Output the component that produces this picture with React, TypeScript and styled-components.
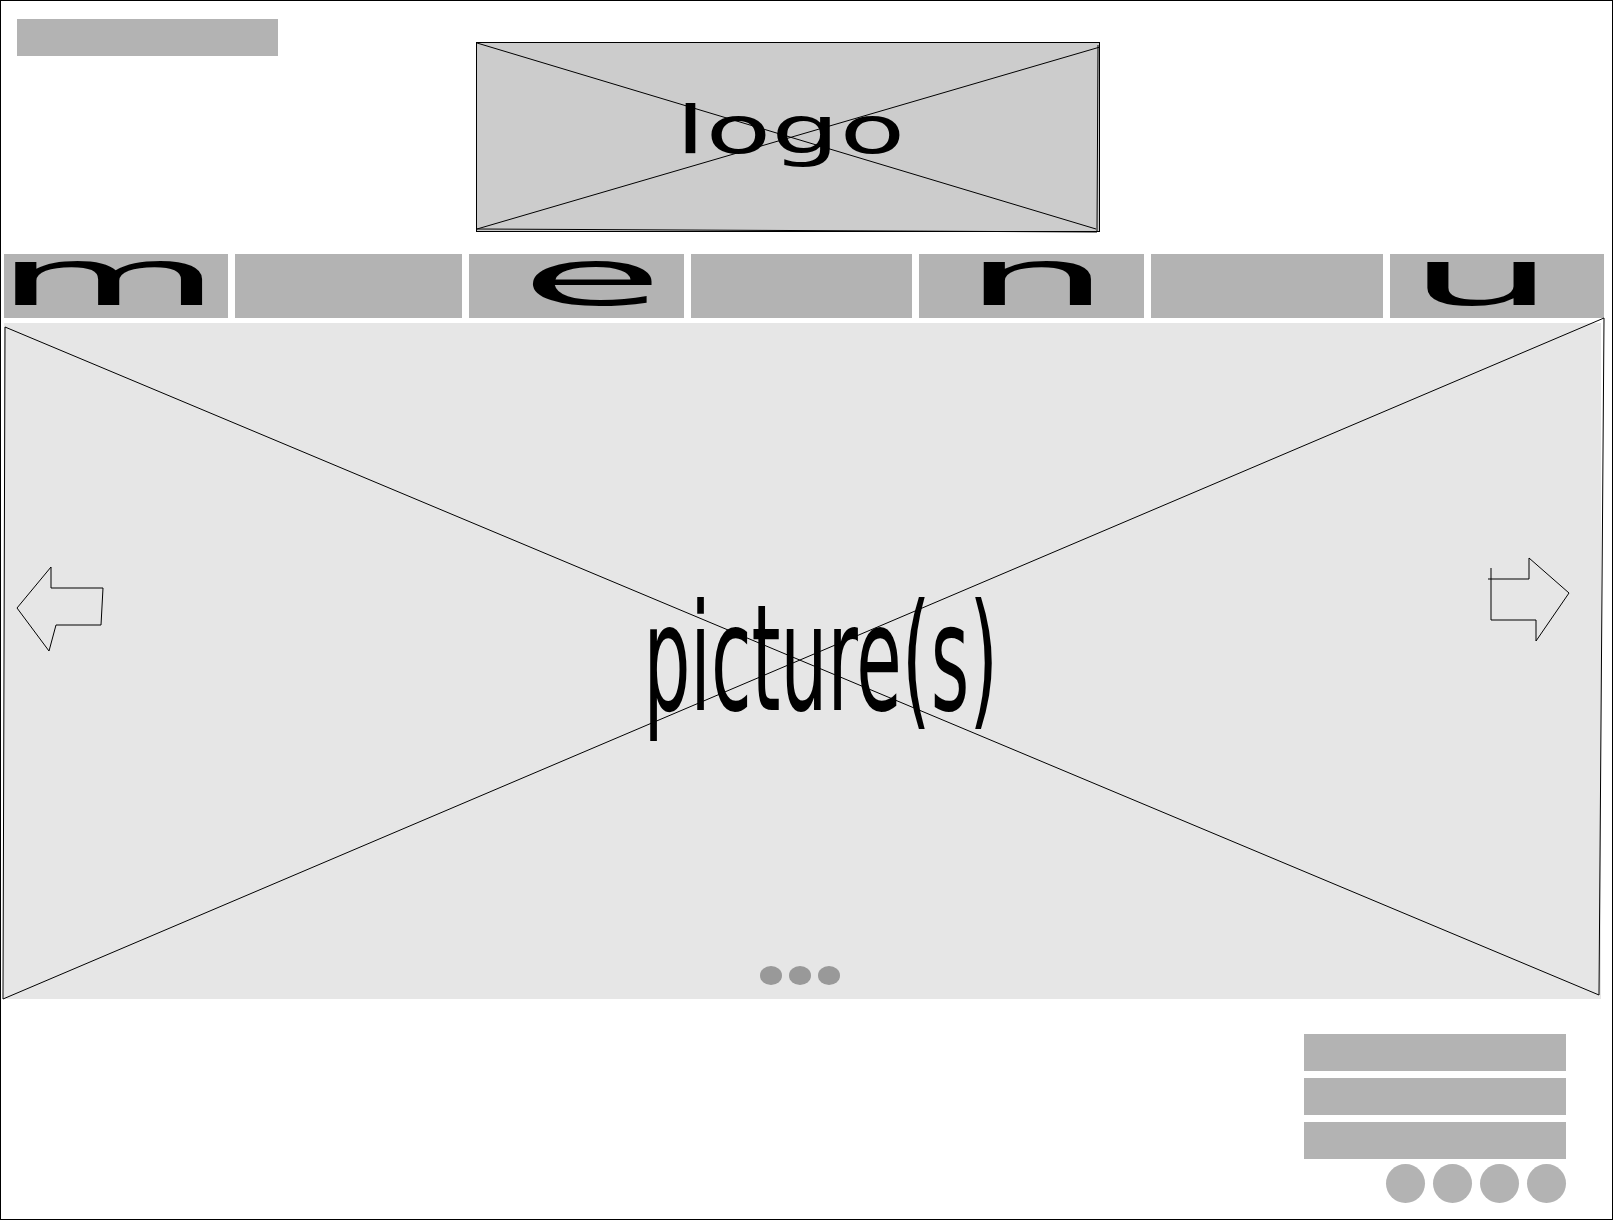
import React from "react";
import styled, { createGlobalStyle } from "styled-components";

const Global = createGlobalStyle`
  html, body { margin: 0; padding: 0; background: #ffffff; }
  body { font-family: "DejaVu Sans", "Liberation Sans", sans-serif; }
`;

const Frame = styled.div`
  width: 1613px;
  height: 1220px;
  box-sizing: border-box;
  border: 1px solid #000;
  background: #fff;
  display: flex;
  flex-direction: column;
  overflow: hidden;
`;

const Header = styled.header`
  height: 253px;
  display: flex;
  align-items: flex-start;
  flex-shrink: 0;
`;

const TopBar = styled.div`
  margin: 18px 0 0 16px;
  width: 261px;
  height: 37px;
  background: #b3b3b3;
`;

const LogoBox = styled.div`
  position: relative;
  margin: 41px 0 0 198px;
  width: 624px;
  height: 190px;
  box-sizing: border-box;
  border: 1px solid #000;
  background: #cccccc;
  display: flex;
  justify-content: center;
  align-items: flex-start;
  padding-top: 55px;
`;

const LogoText = styled.span`
  position: relative;
  font-family: "DejaVu Sans", sans-serif;
  font-size: 66px;
  line-height: 66px;
  color: #000;
  transform: translateX(2px) scaleX(1.63);
`;

const Overlay = styled.svg`
  position: absolute;
  left: 0;
  top: 0;
  width: 100%;
  height: 100%;
  overflow: visible;
  pointer-events: none;
`;

const Menu = styled.nav`
  margin-left: 3px;
  width: 1600px;
  height: 64px;
  display: grid;
  grid-template-columns: 224px 227px 215px 221px 225px 232px 214px;
  column-gap: 7px;
  flex-shrink: 0;
`;

const Segment = styled.div`
  background: #b3b3b3;
  display: flex;
  justify-content: center;
  align-items: flex-start;
`;

const Letter = styled.span<{ $shift: number }>`
  font-family: "DejaVu Sans", sans-serif;
  font-size: 78px;
  line-height: 48px;
  color: #000;
  transform: translateX(${(p) => p.$shift}px) scaleX(3);
`;

const Picture = styled.section`
  position: relative;
  margin: 5px 0 0 3px;
  width: 1597px;
  height: 676px;
  box-sizing: border-box;
  background: #e6e6e6;
  display: flex;
  justify-content: center;
  align-items: center;
  padding: 0 0 4px 36px;
  flex-shrink: 0;
`;

const PictureText = styled.span`
  position: relative;
  font-family: "DejaVu Sans", sans-serif;
  font-size: 148px;
  line-height: 148px;
  color: #000;
  transform: scaleX(0.5);
  white-space: nowrap;
`;

const ArrowButton = styled.svg<{ $side: "left" | "right"; $top: number }>`
  position: absolute;
  top: ${(p) => p.$top}px;
  ${(p) => (p.$side === "left" ? "left: 10px;" : "right: 21px;")}
  width: 100px;
  height: 100px;
  overflow: visible;
`;

const Dots = styled.div`
  position: absolute;
  bottom: 14px;
  left: calc(50% - 3px);
  transform: translateX(-50%);
  display: flex;
  gap: 7px;
`;

const Dot = styled.span`
  width: 22px;
  height: 19px;
  border-radius: 50%;
  background: #999999;
`;

const Footer = styled.footer`
  align-self: flex-end;
  margin: 35px 46px 0 0;
  width: 262px;
  display: flex;
  flex-direction: column;
  gap: 7px;
`;

const FooterBar = styled.div`
  height: 37px;
  background: #b3b3b3;
`;

const Socials = styled.div`
  margin-top: -2px;
  display: flex;
  justify-content: flex-end;
  gap: 8px;
`;

const Social = styled.span`
  width: 39px;
  height: 39px;
  border-radius: 50%;
  background: #b3b3b3;
`;

const menuItems: { letter: string; shift: number }[] = [
  { letter: "m", shift: -8 },
  { letter: "", shift: 0 },
  { letter: "e", shift: 15 },
  { letter: "", shift: 0 },
  { letter: "n", shift: 5 },
  { letter: "", shift: 0 },
  { letter: "u", shift: -15 },
];

export default function App() {
  return (
    <>
      <Global />
      <Frame>
        <Header>
          <TopBar />
          <LogoBox>
            <Overlay>
              <line x1="0" y1="0" x2="619" y2="186" stroke="#000" strokeWidth="1" />
              <line x1="623" y1="4" x2="0" y2="186" stroke="#000" strokeWidth="1" />
              <polyline points="621,2 620,189 0,186" fill="none" stroke="#000" strokeWidth="1" />
            </Overlay>
            <LogoText>logo</LogoText>
          </LogoBox>
        </Header>

        <Menu>
          {menuItems.map((m, i) => (
            <Segment key={i}>
              {m.letter && <Letter $shift={m.shift}>{m.letter}</Letter>}
            </Segment>
          ))}
        </Menu>

        <Picture>
          <Overlay>
            <line x1="1" y1="4" x2="1595" y2="672" stroke="#000" strokeWidth="1" />
            <line x1="1600" y1="-5" x2="-1" y2="676" stroke="#000" strokeWidth="1" />
            <line x1="1" y1="4" x2="-1" y2="676" stroke="#000" strokeWidth="1" />
            <line x1="1600" y1="-5" x2="1595" y2="672" stroke="#000" strokeWidth="1" />
          </Overlay>
          <PictureText>picture(s)</PictureText>
          <ArrowButton $side="left" $top={240} viewBox="0 0 100 100">
            <polygon
              points="3,45 37,4 37,25 89,25 87,62 42,62 35,88"
              fill="none"
              stroke="#000"
              strokeWidth="1"
            />
          </ArrowButton>
          <ArrowButton $side="right" $top={227} viewBox="0 0 100 100">
            <polyline
              points="8,29 49,29 49,8 89,43 56,91 56,70 11,70 11,18"
              fill="none"
              stroke="#000"
              strokeWidth="1"
            />
          </ArrowButton>
          <Dots>
            <Dot />
            <Dot />
            <Dot />
          </Dots>
        </Picture>

        <Footer>
          <FooterBar />
          <FooterBar />
          <FooterBar />
          <Socials>
            <Social />
            <Social />
            <Social />
            <Social />
          </Socials>
        </Footer>
      </Frame>
    </>
  );
}
